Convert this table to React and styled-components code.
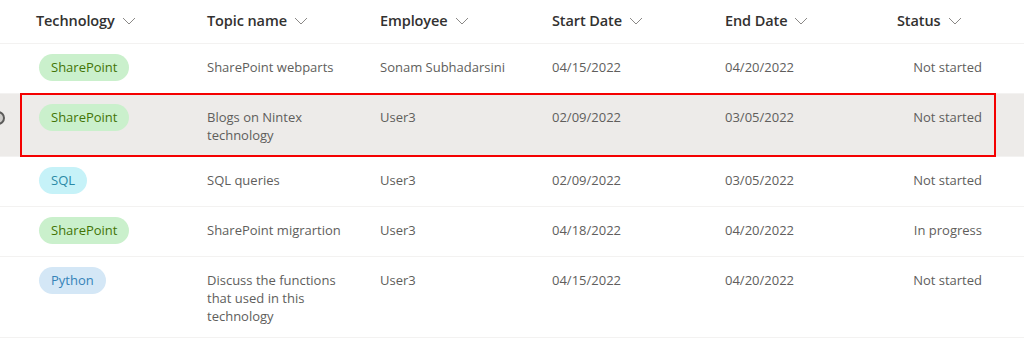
import React from 'react';
import styled, { createGlobalStyle } from 'styled-components';

const GlobalStyle = createGlobalStyle`
  html, body {
    margin: 0;
    padding: 0;
    background: #ffffff;
  }
  body {
    font-family: 'Open Sans', 'Noto Sans', Arial, sans-serif;
    -webkit-font-smoothing: antialiased;
  }
`;

const COLUMNS = '28px 171px 173px 172px 173px 172px 101px 1fr';

const pillColors = {
  green: { bg: '#caf0cc', fg: '#437406' },
  cyan: { bg: '#c6f2f8', fg: '#2b8aa6' },
  blue: { bg: '#d4e7f6', fg: '#3583b8' },
};

const List = styled.div`
  width: 1024px;
  height: 340px;
  overflow: hidden;
  background: #ffffff;
`;

const HeaderRow = styled.div`
  display: grid;
  grid-template-columns: ${COLUMNS};
  height: 43px;
  border-bottom: 1px solid #f3f2f1;
  align-items: center;
`;

const HeaderCell = styled.div`
  display: flex;
  align-items: center;
  gap: 7px;
  padding: 0 0 3px 8px;
  font-size: 14.5px;
  font-weight: 600;
  color: #323130;
  letter-spacing: -0.1px;
  white-space: nowrap;

  svg {
    margin-top: 1px;
  }
`;

const Row = styled.div`
  position: relative;
  display: grid;
  grid-template-columns: ${COLUMNS};
  align-items: start;
  min-height: 49px;
  border-bottom: 1px solid #f3f2f1;
  background: ${(p) => (p.$selected ? '#edebe9' : '#ffffff')};
`;

const Cell = styled.div`
  padding: 14px 8px 12px 8px;
  font-size: 13px;
  line-height: 18px;
  color: #605e5c;
  text-align: ${(p) => (p.$right ? 'right' : 'left')};
`;

const TopicText = styled.div`
  max-width: 142px;
`;

const PillCell = styled.div`
  padding: 10px 8px 12px 11px;
`;

const Pill = styled.span`
  display: inline-block;
  height: 27px;
  line-height: 27px;
  padding: 0 12px;
  border-radius: 14px;
  font-size: 13px;
  background: ${(p) => pillColors[p.$color].bg};
  color: ${(p) => pillColors[p.$color].fg};
`;

const SelectCircle = styled.span`
  position: absolute;
  left: -9px;
  top: 17px;
  width: 10px;
  height: 10px;
  border-radius: 50%;
  border: 2px solid #5c5b5a;
  background: #cfcdcb;
`;

const Highlight = styled.div`
  position: absolute;
  left: 20px;
  right: 28px;
  top: -1px;
  bottom: -1px;
  border: 2px solid #f40000;
  pointer-events: none;
`;

const Chevron = () => (
  <svg width="14" height="8" viewBox="0 0 14 8" aria-hidden="true">
    <path d="M1 1 L7 7 L13 1" fill="none" stroke="#8a8886" strokeWidth="1" />
  </svg>
);

const headers = ['Technology', 'Topic name', 'Employee', 'Start Date', 'End Date', 'Status'];

const rows = [
  { tech: 'SharePoint', color: 'green', topic: 'SharePoint webparts', emp: 'Sonam Subhadarsini', start: '04/15/2022', end: '04/20/2022', status: 'Not started' },
  { tech: 'SharePoint', color: 'green', topic: 'Blogs on Nintex technology', emp: 'User3', start: '02/09/2022', end: '03/05/2022', status: 'Not started', selected: true },
  { tech: 'SQL', color: 'cyan', topic: 'SQL queries', emp: 'User3', start: '02/09/2022', end: '03/05/2022', status: 'Not started' },
  { tech: 'SharePoint', color: 'green', topic: 'SharePoint migrartion', emp: 'User3', start: '04/18/2022', end: '04/20/2022', status: 'In progress' },
  { tech: 'Python', color: 'blue', topic: 'Discuss the functions that used in this technology', emp: 'User3', start: '04/15/2022', end: '04/20/2022', status: 'Not started' },
];

export default function App() {
  return (
    <>
      <GlobalStyle />
      <List>
        <HeaderRow>
          <div />
          {headers.map((h) => (
            <HeaderCell key={h}>
              {h}
              <Chevron />
            </HeaderCell>
          ))}
        </HeaderRow>
        {rows.map((r, i) => (
          <Row key={i} $selected={r.selected}>
            {r.selected && <SelectCircle />}
            <div />
            <PillCell>
              <Pill $color={r.color}>{r.tech}</Pill>
            </PillCell>
            <Cell>
              <TopicText>{r.topic}</TopicText>
            </Cell>
            <Cell>{r.emp}</Cell>
            <Cell>{r.start}</Cell>
            <Cell>{r.end}</Cell>
            <Cell $right>{r.status}</Cell>
            <div />
            {r.selected && <Highlight />}
          </Row>
        ))}
      </List>
    </>
  );
}
